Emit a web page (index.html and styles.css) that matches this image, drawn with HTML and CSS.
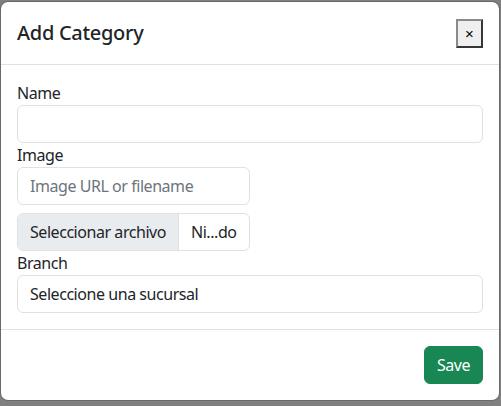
FILE: index.html
```html
<!DOCTYPE html>
<html lang="en">
<head>
<meta charset="utf-8">
<title>Add Category</title>
<link rel="stylesheet" href="styles.css">
</head>
<body>
<div class="modal">
  <div class="modal-header">
    <h5 class="modal-title">Add Category</h5>
    <button class="close-btn" type="button">×</button>
  </div>
  <div class="modal-body">
    <label class="label">Name</label>
    <div class="control"></div>
    <label class="label">Image</label>
    <div class="control half placeholder">Image URL or filename</div>
    <div class="file-control half">
      <span class="file-btn">Seleccionar archivo</span>
      <span class="file-name">Ni...do</span>
    </div>
    <label class="label">Branch</label>
    <div class="control">Seleccione una sucursal</div>
  </div>
  <div class="modal-footer">
    <button class="btn-save" type="button">Save</button>
  </div>
</div>
</body>
</html>
```

FILE: styles.css
```css
html, body {
  margin: 0;
  padding: 0;
}
body {
  background: #808080;
  width: 501px;
  height: 406px;
  overflow: hidden;
  font-family: "Segoe UI", "Noto Sans", "Open Sans", sans-serif;
  font-size: 16px;
  line-height: 1.5;
  letter-spacing: -0.45px;
  color: #212529;
}
.modal {
  box-sizing: border-box;
  width: 500px;
  margin: 1px 0 0 0;
  background: #fff;
  background-clip: padding-box;
  border: 1px solid rgba(0, 0, 0, 0.175);
  border-radius: 8px;
  display: flex;
  flex-direction: column;
}
.modal-header {
  display: flex;
  align-items: center;
  justify-content: space-between;
  padding: 16px;
  border-bottom: 1px solid #dee2e6;
}
.modal-title {
  margin: 0;
  font-size: 20px;
  font-weight: 500;
  line-height: 1.5;
  letter-spacing: -0.3px;
}
.close-btn {
  box-sizing: border-box;
  width: 27px;
  height: 29px;
  padding: 0;
  background: #efefef;
  border: 2px outset #8a8a8a;
  border-radius: 0;
  font-family: Arial, "Liberation Sans", sans-serif;
  font-size: 15px;
  letter-spacing: 0;
  color: #000;
  line-height: 1;
}
.modal-body {
  padding: 16px;
  display: flex;
  flex-direction: column;
  align-items: flex-start;
}
.label {
  display: block;
  line-height: 24px;
}
.control {
  box-sizing: border-box;
  align-self: stretch;
  height: 38px;
  padding: 6px 12px;
  border: 1px solid #dee2e6;
  border-radius: 6px;
  background: #fff;
  white-space: nowrap;
}
.control.half {
  align-self: flex-start;
  width: 50%;
}
.placeholder {
  color: #6c757d;
}
.file-control {
  box-sizing: border-box;
  width: 50%;
  height: 38px;
  margin-top: 8px;
  border: 1px solid #dee2e6;
  border-radius: 6px;
  display: flex;
  overflow: hidden;
  white-space: nowrap;
}
.file-btn {
  background: #e9ecef;
  border-right: 1px solid #dee2e6;
  padding: 6px 12px;
}
.file-name {
  padding: 6px 12px;
}
.modal-footer {
  display: flex;
  justify-content: flex-end;
  padding: 12px;
  border-top: 1px solid #dee2e6;
}
.btn-save {
  margin: 4px;
  padding: 6px 12px;
  height: 38px;
  box-sizing: border-box;
  background: #198754;
  color: #fff;
  border: 1px solid #198754;
  border-radius: 6px;
  font-family: inherit;
  font-size: 16px;
  letter-spacing: inherit;
  line-height: 24px;
}
```
